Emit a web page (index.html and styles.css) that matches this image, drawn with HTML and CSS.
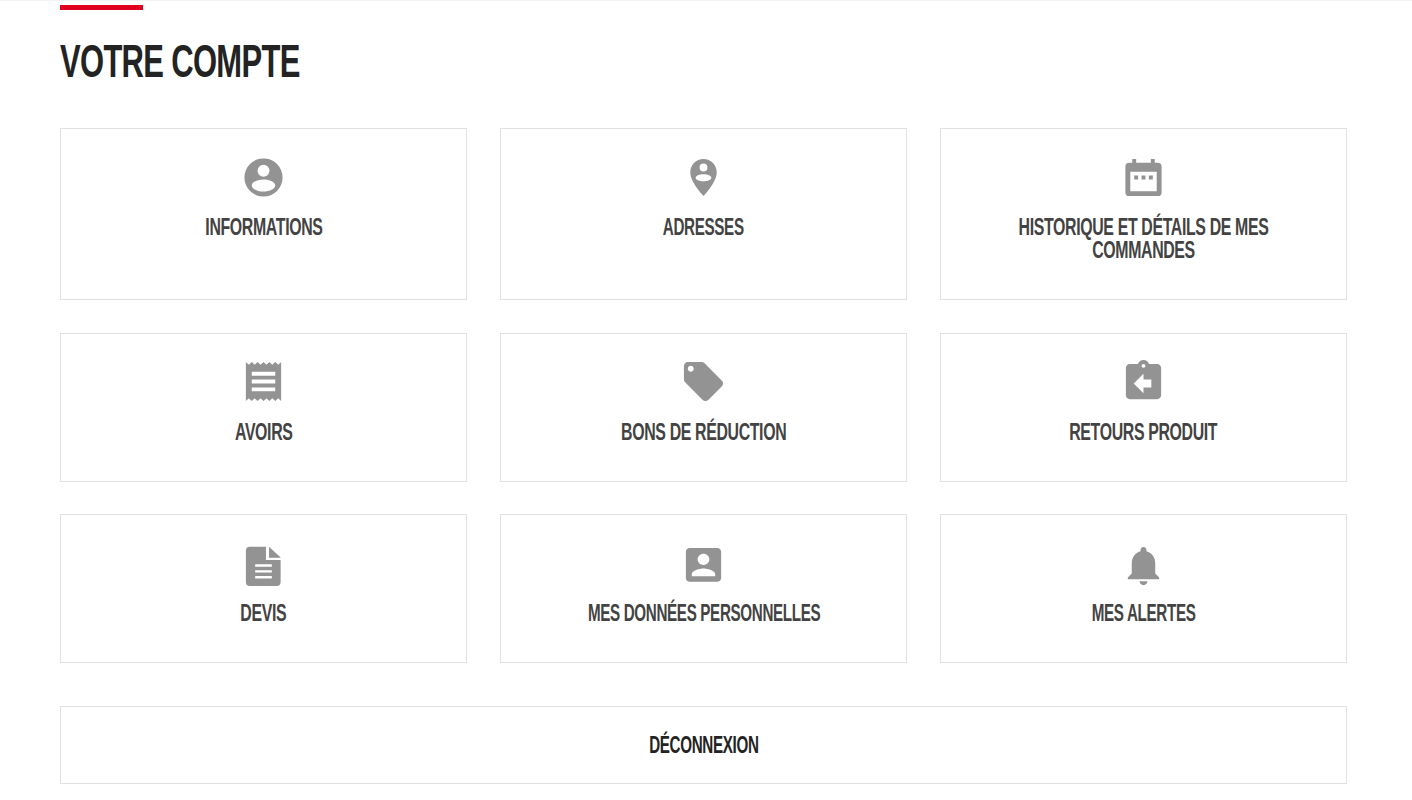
FILE: index.html
```html
<!DOCTYPE html>
<html lang="fr">
<head>
  <meta charset="UTF-8" />
  <meta name="viewport" content="width=device-width, initial-scale=1.0"/>
  <title>Votre compte</title>
  <link rel="stylesheet" href="styles.css">
</head>
<body>
  <div class="page">
    <div class="title-bar"></div>
    <h1 class="page-title"><span class="page-title-text">Votre compte</span></h1>

    <div class="links">
      <a class="link-card" href="#">
        <svg class="icon" viewBox="0 0 24 24"><path fill-rule="evenodd" d="M12 2.25a9.75 9.75 0 1 0 0 19.5 9.75 9.75 0 0 0 0-19.5zm0 3.25a3.05 3.05 0 1 1 0 6.1 3.05 3.05 0 0 1 0-6.1zm0 7.5c3.1 0 6 1.3 6 3.1 0 1.7-2.9 3.1-6 3.1s-6-1.4-6-3.1c0-1.8 2.9-3.1 6-3.1z"/></svg>
        <span class="link-label">Informations</span>
      </a>
      <a class="link-card" href="#">
        <svg class="icon" viewBox="0 0 24 24"><path fill-rule="evenodd" d="M12 2.5c-3.7 0-6.75 2.8-6.75 6.8 0 3.2 2.2 6.9 6.75 12.2 4.55-5.300 6.75-9 6.75-12.200 0-4-3.050-6.800-6.750-6.800zm0 2.400a2 2 0 1 1 0 4 2 2 0 0 1 0-4zm0 5.400c2.200 0 4 .8 4 1.800s-1.800 1.800-4 1.800-4-.8-4-1.800 1.800-1.800 4-1.800z"/></svg>
        <span class="link-label link-label-tight">Adresses</span>
      </a>
      <a class="link-card" href="#">
        <svg class="icon" viewBox="0 0 24 24"><path fill-rule="evenodd" d="M6.250 2.500h2v2h7.500v-2h2v2h1.500a2 2 0 0 1 2 2V19.500a2 2 0 0 1-2 2H4.750a2 2 0 0 1-2-2V6.500a2 2 0 0 1 2-2h1.500zM5.250 9v10h13.500V9zM7.250 11h2v2h-2zM11 11h2v2h-2zM14.750 11h2v2h-2z"/></svg>
        <span class="link-label">Historique et détails de mes commandes</span>
      </a>
      <a class="link-card" href="#">
        <svg class="icon" viewBox="0 0 24 24"><path d="M18 17H6v-2h12v2zm0-4H6v-2h12v2zm0-4H6V7h12v2zM3 22l1.500-1.500L6 22l1.500-1.500L9 22l1.500-1.500L12 22l1.500-1.500L15 22l1.500-1.500L18 22l1.500-1.500L21 22V2l-1.500 1.500L18 2l-1.500 1.500L15 2l-1.500 1.500L12 2l-1.500 1.500L9 2 7.500 3.500 6 2 4.500 3.500 3 2v20z"/></svg>
        <span class="link-label">Avoirs</span>
      </a>
      <a class="link-card" href="#">
        <svg class="icon" viewBox="0 0 24 24"><path d="M21.410 11.580l-9-9C12.050 2.220 11.550 2 11 2H4c-1.100 0-2 .9-2 2v7c0 .55.22 1.050.59 1.420l9 9c.36.36.86.58 1.410.58.55 0 1.050-.22 1.410-.59l7-7c.37-.36.59-.86.59-1.410 0-.55-.23-1.060-.59-1.420zM5.500 7C4.670 7 4 6.330 4 5.500S4.670 4 5.500 4 7 4.670 7 5.500 6.330 7 5.500 7z"/></svg>
        <span class="link-label">Bons de réduction</span>
      </a>
      <a class="link-card" href="#">
        <svg class="icon" viewBox="0 0 24 24"><path d="M19 3h-4.180C14.400 1.840 13.300 1 12 1c-1.300 0-2.400.84-2.820 2H5c-1.100 0-2 .9-2 2v14c0 1.100.9 2 2 2h14c1.100 0 2-.9 2-2V5c0-1.100-.9-2-2-2zm-7 0c.55 0 1 .45 1 1s-.45 1-1 1-1-.45-1-1 .45-1 1-1zm4 12h-4v3l-5-5 5-5v3h4v4z"/></svg>
        <span class="link-label">Retours produit</span>
      </a>
      <a class="link-card" href="#">
        <svg class="icon" viewBox="0 -1.500 24 24"><path d="M5 2h8.250v6.750h7.500V20a2 2 0 0 1-2 2H5a2 2 0 0 1-2-2V4a2 2 0 0 1 2-2zm2.750 8.900v1.200h8.500v-1.200zm0 3v1.200h8.500v-1.200zm0 3v1.200h8.500v-1.200zM14.800 2l6.100 5.600h-6.100z"/></svg>
        <span class="link-label">Devis</span>
      </a>
      <a class="link-card" href="#">
        <svg class="icon" viewBox="0 0 24 24"><path transform="translate(0 1.200) scale(1 .96)" d="M3 5v14c0 1.100.89 2 2 2h14c1.100 0 2-.9 2-2V5c0-1.100-.9-2-2-2H5c-1.110 0-2 .9-2 2zm12 4c0 1.660-1.340 3-3 3s-3-1.340-3-3 1.340-3 3-3 3 1.340 3 3zm-9 8c0-2 4-3.100 6-3.100s6 1.100 6 3.100v1H6v-1z"/></svg>
        <span class="link-label link-label-tight">Mes données personnelles</span>
      </a>
      <a class="link-card" href="#">
        <svg class="icon" viewBox="0 -1.100 24 24"><path d="M12 22c1.100 0 2-.9 2-2h-4c0 1.100.89 2 2 2zm6-6v-5c0-3.070-1.640-5.640-4.500-6.320V4c0-.83-.67-1.500-1.500-1.500s-1.500.67-1.500 1.500v.68C7.630 5.360 6 7.920 6 11v5l-2 2v1h16v-1l-2-2z"/></svg>
        <span class="link-label link-label-tight">Mes alertes</span>
      </a>
    </div>

    <a class="logout" href="#"><span class="link-label link-label-tight">Déconnexion</span></a>
  </div>
</body>
</html>
```

FILE: styles.css
```css
* {
  box-sizing: border-box;
  margin: 0;
  padding: 0;
}

body {
  font-family: "Liberation Sans", sans-serif;
  background: white;
  border-top: 1px solid #f3f3f3;
}

.page {
  width: 1287.4px;
  margin-left: 60px;
  padding-bottom: 16px;
}

.title-bar {
  width: 83px;
  height: 5px;
  margin-top: 4px;
  background: #e2001f;
}

.page-title {
  height: 118px;
  padding-top: 23px;
  font-size: 46px;
  line-height: 56px;
  font-weight: bold;
  text-transform: uppercase;
  color: #232323;
  letter-spacing: -1px;
}

/* no condensed font installed, so the text is squeezed */
.page-title-text {
  display: inline-block;
  transform: scaleX(0.673);
  transform-origin: left center;
}

.links {
  display: grid;
  grid-template-columns: repeat(3, 1fr);
  gap: 32.6px;
}

.link-card {
  display: flex;
  flex-direction: column;
  align-items: center;
  padding: 24.5px 10px 37px;
  border: 1px solid #e1e1e1;
  text-align: center;
  text-decoration: none;
  color: #434343;
}

.icon {
  width: 47px;
  height: 47px;
  margin-bottom: 15.5px;
  fill: #939393;
}

.link-label {
  max-width: 365px;
  font-size: 23px;
  line-height: 23px;
  font-weight: bold;
  text-transform: uppercase;
  letter-spacing: -0.5px;
  transform: scaleX(0.69);
}

.link-label-tight {
  transform: scaleX(0.66);
}

.logout {
  display: flex;
  justify-content: center;
  align-items: center;
  height: 78px;
  margin-top: 43px;
  border: 1px solid #e1e1e1;
  text-decoration: none;
  color: #232323;
}
```
